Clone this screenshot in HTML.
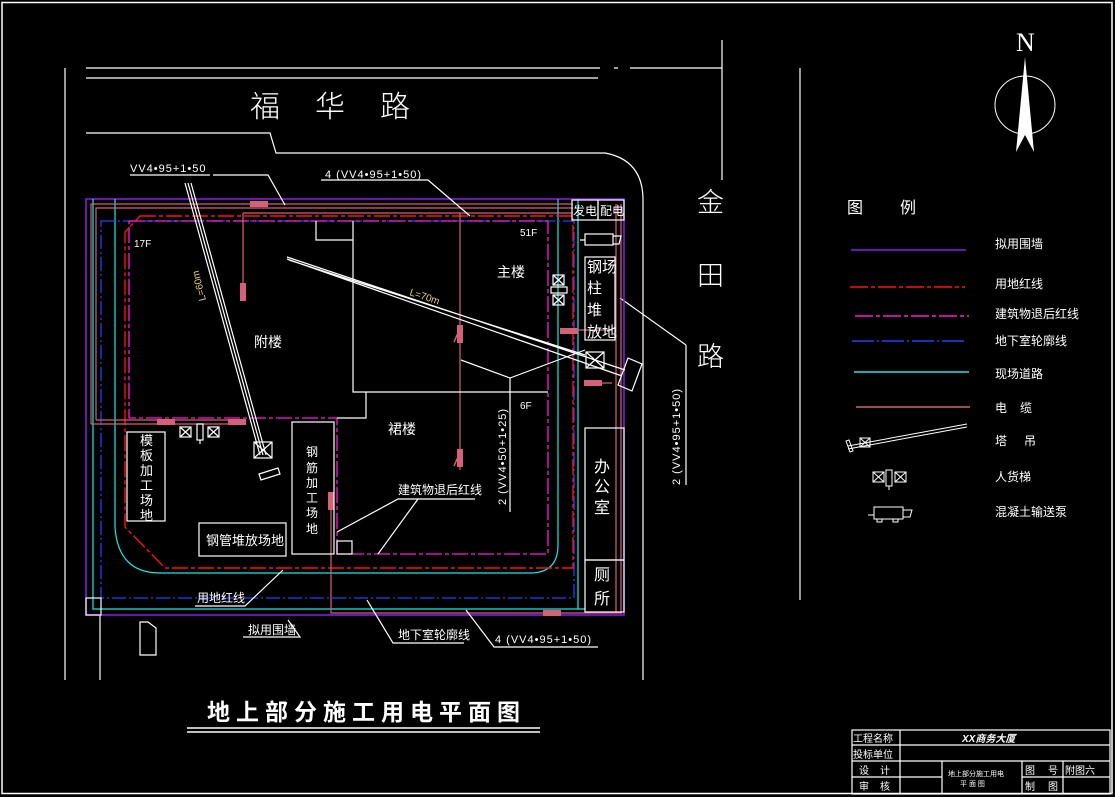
<!DOCTYPE html>
<html><head><meta charset="utf-8"><style>
html,body{margin:0;padding:0;background:#000;width:1115px;height:797px;overflow:hidden}
svg{display:block}
text{font-family:"Liberation Sans","Noto Sans CJK SC",sans-serif;fill:#fff}
</style></head><body>
<svg width="1115" height="797" viewBox="0 0 1115 797" xmlns="http://www.w3.org/2000/svg">
<rect x="0" y="0" width="1115" height="797" fill="#000"/>
<rect x="2" y="2.5" width="1110" height="791" fill="none" stroke="#fff" stroke-width="1.5"/>
<g stroke="#fff" stroke-width="1.2" fill="none">
<path d="M86 68H600M614 68H618M630 68H722M722 40V180"/>
<path d="M86 78H598"/>
<path d="M86 133L270 133L276 153H605Q643 160 643 200V680"/>
<path d="M800 68V600"/>
<path d="M65 68V680M100 615V680"/>
<path d="M686 345V485M620 298L686 345"/>
</g>
<g font-size="30" style="font-family:'Noto Sans CJK SC',sans-serif;font-weight:300"><text x="250" y="117">福</text><text x="315" y="117">华</text><text x="380" y="117">路</text></g>
<g font-size="27" style="font-family:'Noto Sans CJK SC',sans-serif;font-weight:300"><text x="697" y="212">金</text><text x="697" y="285">田</text><text x="697" y="366">路</text></g>

<rect x="86" y="199" width="538" height="416" fill="none" stroke="#8a1cf0" stroke-width="1.5"/>
<g stroke="#19e8e8" stroke-width="1.2" fill="none">
<path d="M93 199V609H585"/>
<path d="M115 199V527Q118 573 160 573H530Q558 573 558 545V199"/>
<path d="M578 199V609"/>
</g>
<rect x="101" y="221" width="473" height="377" fill="none" stroke="#2040ff" stroke-width="1.3" stroke-dasharray="14 3 2 3"/>
<path d="M140 216H573V568H165L125 527V232Z" fill="none" stroke="#ff1010" stroke-width="1.4" stroke-dasharray="16 3 4 3"/>
<path d="M129 221H548V554H337V418H129Z" fill="none" stroke="#ff18d8" stroke-width="1.3" stroke-dasharray="16 3 4 3"/>
<g stroke="#d4607a" stroke-width="1.2" fill="none">
<path d="M91 424V204H573M96 420V208H573M245 420H96M245 424H91"/>
<path d="M243 213V290M243 213H573M460 213V470"/>
<path d="M331 500V613H622M616 204V612M621 204V612"/>
<path d="M578 330H612M600 383H612"/>
</g>
<g fill="#d4607a">
<rect x="250" y="201" width="18" height="6"/><rect x="240" y="283" width="6" height="18"/>
<rect x="157" y="419" width="18" height="6"/><rect x="228" y="419" width="18" height="6"/>
<rect x="457" y="325" width="6" height="18"/><rect x="457" y="449" width="6" height="18"/>
<rect x="328" y="492" width="6" height="18"/><rect x="560" y="328" width="18" height="6"/>
<rect x="584" y="380" width="18" height="6"/><rect x="543" y="610" width="18" height="6"/>
</g>
<g stroke="#fff" stroke-width="1.2" fill="none">
<path d="M316 221V240H353V221M353 221V392H548M366 392V418H337"/>
<rect x="572" y="200" width="26" height="20"/><rect x="598" y="200" width="26" height="20"/>
<rect x="585" y="257" width="30" height="83"/>
<rect x="585" y="428" width="39" height="132"/><rect x="585" y="560" width="39" height="52"/>
<rect x="127" y="432" width="38" height="89"/>
<rect x="292" y="422" width="42" height="132"/>
<rect x="199" y="523" width="87" height="33"/>
<rect x="337" y="541" width="15" height="13"/>
<rect x="86" y="598" width="15" height="17"/>
<path d="M140 622V655H156V628L148 622Z"/>
<path d="M188 183L263 455M191 183L266 455M185 183L260 455"/>
<rect x="254" y="442" width="18" height="16"/><path d="M254 442L272 458M272 442L254 458"/>
<path d="M259 474L278 468L280 474L261 480Z"/>
<path d="M287 257L625 370M287 259L622 376M289 260L585 355"/>
<rect x="586" y="352" width="18" height="16"/><path d="M586 352L604 368M604 352L586 368"/>
<path d="M628 358L642 364L632 391L618 385Z"/>
<rect x="180" y="427" width="11" height="10"/><path d="M180 427L191 437M191 427L180 437"/>
<rect x="197" y="424" width="6" height="16"/><path d="M200 440V444"/>
<rect x="208" y="427" width="11" height="10"/><path d="M208 427L219 437M219 427L208 437"/>
<rect x="553" y="275" width="11" height="10"/><path d="M553 275L564 285M564 275L553 285"/>
<rect x="551" y="287" width="16" height="6"/>
<rect x="553" y="295" width="11" height="10"/><path d="M553 295L564 305M564 295L553 305"/>
<rect x="585" y="234" width="28" height="11"/><path d="M580 240H585M613 236H621L619 244H613"/>
<path d="M213 175H268L285 205"/>
<path d="M321 180H428L470 216"/>
<path d="M461 360L510 378L585 350M510 378V512"/>
<path d="M337 532L398 499H475M418 499L378 554"/>
<path d="M195 606H245L283 570"/>
<path d="M243 637H300L288 620"/>
<path d="M367 600L393 643H464"/>
<path d="M466 610L494 647H598"/>
<path d="M130 175H210"/>
</g>
<path d="M461 326L454 342M461 450L454 466" stroke="#d4607a" stroke-width="1.5"/>
<g font-size="12">
<text x="130" y="172" font-size="11" letter-spacing="1">VV4•95+1•50</text>
<text x="325" y="178" font-size="11" letter-spacing="1">4 (VV4•95+1•50)</text>
<text x="495" y="643" font-size="11" letter-spacing="1">4 (VV4•95+1•50)</text>
<text font-size="11" letter-spacing="1" transform="translate(506,505) rotate(-90)">2 (VV4•50+1•25)</text>
<text font-size="11" letter-spacing="1" transform="translate(680,485) rotate(-90)">2 (VV4•95+1•50)</text>
<text x="409" y="295" font-size="10" style="fill:#e8d080" transform="rotate(18 409 295)">L=70m</text>
<text font-size="10" style="fill:#e8d080" transform="translate(206,300) rotate(-104)">L=60m</text>
<text x="134" y="247" font-size="10">17F</text>
<text x="520" y="236" font-size="10">51F</text>
<text x="520" y="409" font-size="10">6F</text>
<text x="254" y="347" font-size="14">附楼</text>
<text x="497" y="277" font-size="14">主楼</text>
<text x="388" y="434" font-size="14">裙楼</text>
<text x="573" y="215" font-size="12">发电</text><text x="600" y="215" font-size="12">配电</text>
<text x="587" y="272" font-size="15">钢场</text><text x="587" y="293" font-size="15">柱</text><text x="587" y="315" font-size="15">堆</text><text x="587" y="337" font-size="15">放地</text>
<text x="594" y="472" font-size="16">办</text><text x="594" y="492" font-size="16">公</text><text x="594" y="513" font-size="16">室</text>
<text x="594" y="580" font-size="16">厕</text><text x="594" y="604" font-size="16">所</text>
<g font-size="13"><text x="140" y="445">模</text><text x="140" y="460">板</text><text x="140" y="475">加</text><text x="140" y="490">工</text><text x="140" y="505">场</text><text x="140" y="520">地</text></g>
<g font-size="12"><text x="306" y="456">钢</text><text x="306" y="472">筋</text><text x="306" y="487">加</text><text x="306" y="502">工</text><text x="306" y="517">场</text><text x="306" y="533">地</text></g>
<text x="206" y="545" font-size="13">钢管堆放场地</text>
<text x="398" y="494" font-size="12">建筑物退后红线</text>
<text x="197" y="602" font-size="12">用地红线</text>
<text x="248" y="634" font-size="12">拟用围墙</text>
<text x="398" y="639" font-size="12">地下室轮廓线</text>
</g>
<text x="207" y="720" font-size="23" font-weight="bold" letter-spacing="6">地上部分施工用电平面图</text>
<path d="M187 728H540M187 732H540" stroke="#fff" stroke-width="1.5"/>
<ellipse cx="1025" cy="105" rx="30" ry="29" fill="none" stroke="#fff" stroke-width="1"/>
<path d="M1025 57L1034 152L1025 135L1016 152Z" fill="#fff"/>
<text x="1016" y="51" font-size="26" style="font-family:'Liberation Serif',serif">N</text>
<text x="847" y="213" font-size="16">图</text><text x="900" y="213" font-size="16">例</text>
<g stroke-width="1.5">
<path d="M851 250H966" stroke="#8a1cf0"/>
<path d="M850 287H965" stroke="#ff1010" stroke-dasharray="18 3 4 3"/>
<path d="M855 316H969" stroke="#ff18d8" stroke-dasharray="18 3 4 3"/>
<path d="M852 341H967" stroke="#2040ff" stroke-dasharray="22 3 2 3"/>
<path d="M854 372H969" stroke="#19e8e8"/>
<path d="M856 407H970" stroke="#d4607a"/>
</g>
<g stroke="#fff" stroke-width="1" fill="none">
<path d="M848 446L967 424M848 449L967 427"/>
<path d="M846 441L850 452L853 451L849 440Z"/>
<rect x="860" y="438" width="10" height="9"/><path d="M860 438L870 447M870 438L860 447"/>
<rect x="873" y="472" width="11" height="10"/><path d="M873 472L884 482M884 472L873 482"/>
<rect x="886" y="470" width="6" height="16"/><path d="M889 486V490"/>
<rect x="895" y="472" width="11" height="10"/><path d="M895 472L906 482M906 472L895 482"/>
<rect x="874" y="507" width="29" height="12"/><path d="M868 515H874M903 510H912L910 517H903M877 519V522H882V519M893 519V522H898V519"/>
</g>
<g font-size="12">
<text x="995" y="248">拟用围墙</text><text x="995" y="288">用地红线</text><text x="995" y="318">建筑物退后红线</text>
<text x="995" y="345">地下室轮廓线</text><text x="995" y="378">现场道路</text><text x="995" y="412">电</text><text x="1020" y="412">缆</text>
<text x="995" y="445">塔</text><text x="1024" y="445">吊</text><text x="995" y="481">人货梯</text><text x="995" y="516">混凝土输送泵</text>
</g>
<g stroke="#fff" stroke-width="1.2" fill="none">
<rect x="852" y="730" width="258" height="64"/>
<path d="M852 745H1110M852 761H1110M852 777H942M1022 777H1110M900 730V794M942 761V794M1022 761V794M1063 761V794"/>
</g>
<g font-size="10">
<text x="853" y="742">工程名称</text><text x="853" y="758">投标单位</text>
<text x="859" y="774">设</text><text x="880" y="774">计</text><text x="859" y="790">审</text><text x="880" y="790">核</text>
<text x="1025" y="774">图</text><text x="1048" y="774">号</text><text x="1065" y="774">附图六</text>
<text x="1025" y="790">制</text><text x="1048" y="790">图</text>
<text x="962" y="742" font-weight="bold" font-style="italic">XX商务大厦</text>
<text x="948" y="776" font-size="7">地上部分施工用电</text><text x="960" y="786" font-size="7">平 面 图</text>
</g>
</svg>
</body></html>
